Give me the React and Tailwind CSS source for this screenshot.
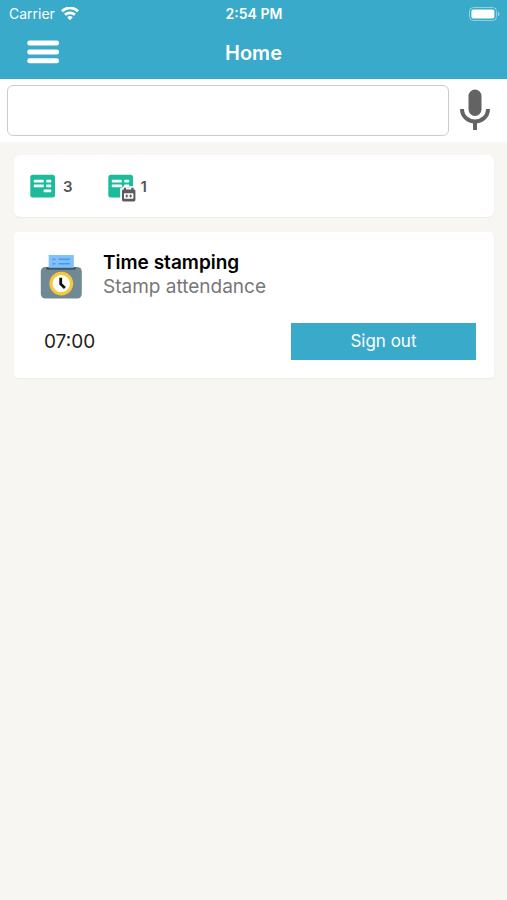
import React from "react";

const WifiIcon = () => (
  <svg viewBox="0 0 18 14" className="h-[14px] w-[18px]" fill="none" stroke="white" strokeWidth="2.8" aria-hidden="true">
    <path d="M1 4.2a11.5 11.5 0 0 1 16 0" />
    <path d="M4 7.8a7.2 7.2 0 0 1 10 0" />
    <path d="M9 13.2l-2.8-2.9a4 4 0 0 1 5.6 0z" fill="white" stroke="none" />
  </svg>
);

const BatteryIcon = () => (
  <svg viewBox="0 0 31 14" className="h-[14px] w-[31px]" aria-hidden="true">
    <rect x="0.5" y="0.5" width="27" height="13" rx="4" fill="none" stroke="white" strokeOpacity="0.45" />
    <rect x="2.4" y="2.4" width="23" height="9.2" rx="2" fill="white" />
    <path d="M29 4.8c2 .8 2 3.6 0 4.4z" fill="white" fillOpacity="0.5" />
  </svg>
);

const MenuIcon = () => (
  <svg viewBox="0 0 32 24" className="h-6 w-8" fill="white" aria-hidden="true">
    <rect x="0.3" y="0.5" width="31.7" height="5" rx="2.2" />
    <rect x="0.3" y="9.5" width="31.7" height="5" rx="2.2" />
    <rect x="0.3" y="18.3" width="31.7" height="5" rx="2.2" />
  </svg>
);

const MicIcon = () => (
  <svg viewBox="0 0 30 42" className="h-[42px] w-[30px]" aria-hidden="true">
    <rect x="8.5" y="0.5" width="13" height="26.5" rx="6.5" fill="#636363" />
    <path d="M2 20c0 7.5 6 12.5 13 12.5S28 27.5 28 20" fill="none" stroke="#636363" strokeWidth="4" />
    <path d="M15 32v9" stroke="#636363" strokeWidth="4" />
  </svg>
);

const SheetIcon = ({ withCalendar }) => (
  <svg viewBox="0 -4 29 34" className="h-[34px] w-[29px]" aria-hidden="true">
    <rect x="0.3" y="0.8" width="24.7" height="22.7" rx="2.5" fill="#1abc9c" />
    <g fill="white">
      <rect x="3.8" y="5.8" width="10" height="2.6" rx="0.6" />
      <rect x="16.2" y="5.8" width="5" height="2.6" rx="0.6" />
      <rect x="3.8" y="10.6" width="10" height="2.6" rx="0.6" />
      <rect x="16.2" y="10.6" width="5" height="2.6" rx="0.6" />
      <rect x="13.6" y="15.6" width="7.6" height="2.6" rx="0.6" />
    </g>
    {withCalendar && (
      <g transform="translate(0 1.3)">
        <path d="M12.2 13.8q0-1.5 1.5-1.5h1V11h4.5v1.3h2V11h4.5v1.3H29V28H12.2z" fill="white" />
        <path d="M14 15.5q0-1.2 1.2-1.2h.6v-1.8h2.4v1.8h5v-1.8h2.4v1.8h.6q1.2 0 1.2 1.2v9.3q0 1.4-1.4 1.4H15.4q-1.4 0-1.4-1.4z" fill="#5f5a5e" />
        <rect x="16" y="18" width="9.4" height="5.4" rx="0.6" fill="white" />
        <path d="M17.4 20.7h2.8M18.8 19.3v2.8M21.2 20.7H24M22.6 19.3v2.8" stroke="#5f5a5e" strokeWidth="1.2" />
      </g>
    )}
  </svg>
);

const StampClockIcon = () => (
  <svg viewBox="0 0 42 45" className="h-[45px] w-[42px]" aria-hidden="true">
    <rect x="0.8" y="13" width="41" height="31.5" rx="4.5" fill="#708994" />
    <rect x="6.3" y="13" width="29.5" height="2.8" rx="1" fill="#42565f" />
    <path d="M8.7 1h25.1v12.8H8.7z" fill="#80c0fb" />
    <path d="M12.5 5.2h3M18.5 5.2H30M12.5 9.8h3M18.5 9.8H30" stroke="#4b99ea" strokeWidth="1.5" />
    <circle cx="21.3" cy="29.6" r="11.9" fill="#f6c83a" />
    <circle cx="21.3" cy="29.6" r="8.7" fill="white" />
    <path d="M20.7 23.7v6.2l4.2 4" fill="none" stroke="#111" strokeWidth="2.8" />
  </svg>
);

const Header = () => (
  <header className="bg-[#39aac9] text-white">
    <div className="grid h-7 grid-cols-[1fr_auto_1fr] items-center pl-2 pr-[7px] text-sm">
      <div className="flex items-center gap-[6px] pl-px">
        <span>Carrier</span>
        <WifiIcon />
      </div>
      <span className="text-center font-semibold">2:54 PM</span>
      <div className="flex justify-end">
        <BatteryIcon />
      </div>
    </div>
    <div className="grid h-[51px] grid-cols-[60px_1fr_60px] items-center">
      <button type="button" aria-label="Menu" className="pb-1 pl-[27px]">
        <MenuIcon />
      </button>
      <h1 className="pb-[2px] text-center text-xl font-semibold">Home</h1>
    </div>
  </header>
);

const SearchBar = () => (
  <div className="flex items-center bg-white py-[6px] pl-[7px] pr-[17px]">
    <input
      type="text"
      aria-label="Search"
      className="h-[51px] min-w-0 flex-1 rounded-md border border-[#cccccc] bg-white px-3 text-lg outline-none"
    />
    <button type="button" aria-label="Voice search" className="ml-[11px] pb-[2px]">
      <MicIcon />
    </button>
  </div>
);

const App = () => {
  return (
    <div className="min-h-screen bg-[#f7f6f2] font-['Inter','Liberation_Sans',sans-serif]">
      <Header />
      <SearchBar />

      <main className="flex flex-col gap-[15px] py-[13px] pl-[14px] pr-[13px]">
        <section className="flex h-[62px] items-center gap-[35px] rounded-md bg-white px-4 pt-[2px] text-[15px] font-semibold text-[#555555] shadow-xs">
          <div className="flex items-center gap-1">
            <SheetIcon />
            <span>3</span>
          </div>
          <div className="flex items-center gap-1">
            <SheetIcon withCalendar />
            <span>1</span>
          </div>
        </section>

        <section className="rounded-sm bg-white pb-[18px] pl-[26px] pr-[18px] pt-[19px] shadow-xs">
          <div className="flex items-end gap-[21px]">
            <StampClockIcon />
            <div className="text-[19px] leading-6">
              <h2 className="font-semibold text-black">Time stamping</h2>
              <p className="text-[#777777]">Stamp attendance</p>
            </div>
          </div>
          <div className="mt-6 flex items-center justify-between pl-1">
            <span className="pt-[2px] text-[19px] text-[#222222]">07:00</span>
            <button type="button" className="h-[37px] w-3/7 bg-[#39aac9] text-[17px] text-white">
              Sign out
            </button>
          </div>
        </section>
      </main>
    </div>
  );
};

export default App;
